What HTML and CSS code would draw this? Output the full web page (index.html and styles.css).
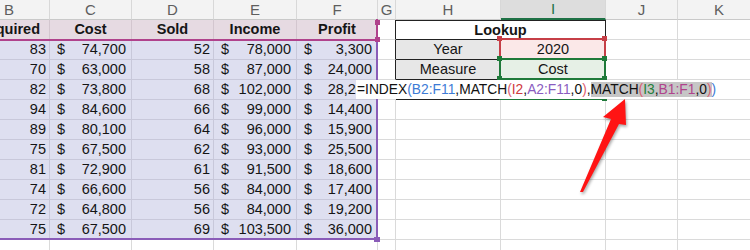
FILE: index.html
```html
<!DOCTYPE html>
<html>
<head>
<meta charset="utf-8">
<link rel="stylesheet" href="styles.css">
</head>
<body>
<div class="sheet">
  <div class="grid">
    <div class="c ch">B</div><div class="c ch">C</div><div class="c ch">D</div><div class="c ch">E</div><div class="c ch">F</div><div class="c ch">G</div><div class="c ch">H</div><div class="c ch sel">I</div><div class="c ch">J</div><div class="c ch">K</div>

    <div class="c th first"><span>Units Required</span></div><div class="c th">Cost</div><div class="c th">Sold</div><div class="c th">Income</div><div class="c th">Profit</div><div class="c g-lk"></div><div class="c lk-title">Lookup</div><div class="c"></div><div class="c"></div>

    <div class="c d num">83</div><div class="c d acc"><span>$</span><span>74,700</span></div><div class="c d num">52</div><div class="c d acc"><span>$</span><span>78,000</span></div><div class="c d acc"><span>$</span><span>3,300</span></div><div class="c g-lk"></div><div class="c lk-label">Year</div><div class="c lk-val pink">2020</div><div class="c"></div><div class="c"></div>

    <div class="c d num">70</div><div class="c d acc"><span>$</span><span>63,000</span></div><div class="c d num">58</div><div class="c d acc"><span>$</span><span>87,000</span></div><div class="c d acc"><span>$</span><span>24,000</span></div><div class="c g-lk"></div><div class="c lk-label">Measure</div><div class="c lk-val mint">Cost</div><div class="c"></div><div class="c"></div>

    <div class="c d num">82</div><div class="c d acc"><span>$</span><span>73,800</span></div><div class="c d num">68</div><div class="c d acc"><span>$</span><span>102,000</span></div><div class="c d acc"><span>$</span><span>28,200</span></div><div class="c"></div><div class="c h4"></div><div class="c"></div><div class="c"></div><div class="c"></div>

    <div class="c d num">94</div><div class="c d acc"><span>$</span><span>84,600</span></div><div class="c d num">66</div><div class="c d acc"><span>$</span><span>99,000</span></div><div class="c d acc"><span>$</span><span>14,400</span></div><div class="c"></div><div class="c"></div><div class="c"></div><div class="c"></div><div class="c"></div>

    <div class="c d num">89</div><div class="c d acc"><span>$</span><span>80,100</span></div><div class="c d num">64</div><div class="c d acc"><span>$</span><span>96,000</span></div><div class="c d acc"><span>$</span><span>15,900</span></div><div class="c"></div><div class="c"></div><div class="c"></div><div class="c"></div><div class="c"></div>

    <div class="c d num">75</div><div class="c d acc"><span>$</span><span>67,500</span></div><div class="c d num">62</div><div class="c d acc"><span>$</span><span>93,000</span></div><div class="c d acc"><span>$</span><span>25,500</span></div><div class="c"></div><div class="c"></div><div class="c"></div><div class="c"></div><div class="c"></div>

    <div class="c d num">81</div><div class="c d acc"><span>$</span><span>72,900</span></div><div class="c d num">61</div><div class="c d acc"><span>$</span><span>91,500</span></div><div class="c d acc"><span>$</span><span>18,600</span></div><div class="c"></div><div class="c"></div><div class="c"></div><div class="c"></div><div class="c"></div>

    <div class="c d num">74</div><div class="c d acc"><span>$</span><span>66,600</span></div><div class="c d num">56</div><div class="c d acc"><span>$</span><span>84,000</span></div><div class="c d acc"><span>$</span><span>17,400</span></div><div class="c"></div><div class="c"></div><div class="c"></div><div class="c"></div><div class="c"></div>

    <div class="c d num">72</div><div class="c d acc"><span>$</span><span>64,800</span></div><div class="c d num">56</div><div class="c d acc"><span>$</span><span>84,000</span></div><div class="c d acc"><span>$</span><span>19,200</span></div><div class="c"></div><div class="c"></div><div class="c"></div><div class="c"></div><div class="c"></div>

    <div class="c d num">75</div><div class="c d acc"><span>$</span><span>67,500</span></div><div class="c d num">69</div><div class="c d acc"><span>$</span><span>103,500</span></div><div class="c d acc"><span>$</span><span>36,000</span></div><div class="c"></div><div class="c"></div><div class="c"></div><div class="c"></div><div class="c"></div>

    <div class="c"></div><div class="c"></div><div class="c"></div><div class="c"></div><div class="c"></div><div class="c"></div><div class="c"></div><div class="c"></div><div class="c"></div><div class="c"></div>
  </div>

  <div class="rng rng-hdr"></div>
  <div class="rng rng-data"></div>
  <div class="hd hd-mag hd-a"></div>
  <div class="hd hd-mag hd-b"></div>
  <div class="hd hd-pur hd-c"></div>

  <div class="rng rng-i2"></div>
  <div class="rng rng-i3"></div>
  <div class="rng active-edge"></div>
  <div class="hd hd-red hd-i2l"></div>
  <div class="hd hd-red hd-i2r"></div>
  <div class="hd hd-grn hd-i3tl"></div>
  <div class="hd hd-grn hd-i3tr"></div>
  <div class="hd hd-grn hd-i3bl"></div>
  <div class="hd hd-grn hd-i3br"></div>
  <div class="hd hd-grn hd-i4br"></div>

  <div class="edit">=INDEX<span class="p-blue">(</span><span class="r-blue">B2:F11</span>,MATCH<span class="p-pink">(</span><span class="r-red">I2</span>,<span class="r-pur">A2:F11</span>,0<span class="p-pink">)</span>,<span class="hl">MATCH<span class="p-pink">(</span><span class="r-grn">I3</span>,<span class="r-mag">B1:F1</span>,0<span class="p-pink">)</span></span><span class="p-blue">)</span></div>

  <svg class="arrow" width="750" height="250" viewBox="0 0 750 250">
    <polygon points="625,99 603,117 611,119 580,192 583,192 619,124 626,125" fill="#ff1414"/>
  </svg>
</div>
</body>
</html>
```

FILE: styles.css
```css
html, body {
  margin: 0;
  padding: 0;
  background: #ffffff;
  overflow: hidden;
}
body {
  font-family: "Liberation Sans", Arial, sans-serif;
}
.sheet {
  position: relative;
  width: 750px;
  height: 250px;
  overflow: hidden;
}
.grid {
  display: grid;
  grid-template-columns: 81px 82px 82px 83px 81px 18px 105px 105px 72px 83px;
  grid-auto-rows: 20px;
  width: 792px;
  margin-left: -31px;
}
.c {
  box-sizing: border-box;
  border-right: 1px solid #dadada;
  border-bottom: 1px solid #dadada;
  font-size: 14.5px;
  line-height: 19px;
  white-space: nowrap;
  overflow: hidden;
  color: #151515;
}
.ch {
  background: #f3f3f3;
  border-right-color: #d8d8d8;
  border-bottom-color: #c9c9c9;
  text-align: center;
  color: #5e5e5e;
  font-size: 15px;
}
.ch.sel {
  background: #dddddd;
  border-bottom: 2px solid #1e7145;
  color: #1e7145;
  line-height: 18px;
}
.th {
  background: #e6dae2;
  border-right-color: #d3c6cf;
  border-bottom-color: #d3c6cf;
  font-weight: bold;
  text-align: center;
}
.th.first {
  display: flex;
  justify-content: flex-end;
  padding-right: 9px;
}
.d {
  background: #dedff0;
  border-right-color: #c8c8da;
  border-bottom-color: #c8c8da;
}
.num {
  text-align: right;
  padding-right: 3px;
}
.acc {
  display: flex;
  justify-content: space-between;
  padding: 0 5px 0 7px;
}
.g-lk {
  border-right-color: #222222;
}
.lk-title {
  grid-column: span 2;
  border-top: 1px solid #222222;
  border-right-color: #222222;
  border-bottom-color: #222222;
  font-weight: bold;
  text-align: center;
  line-height: 18px;
}
.lk-label {
  background: #e7e7e7;
  border-right-color: #222222;
  border-bottom-color: #222222;
  text-align: center;
}
.lk-val {
  border-right-color: #222222;
  border-bottom-color: #222222;
  text-align: center;
}
.pink { background: #fbe8e8; }
.mint { background: #e6f0e6; }
.h4 { border-bottom-color: #222222; }

/* range highlight overlays */
.rng {
  position: absolute;
  box-sizing: border-box;
}
.rng-hdr {
  left: -40px;
  top: 19px;
  width: 418px;
  height: 22px;
  border-right: 2px solid #b0428c;
  border-bottom: 2px solid #b0428c;
}
.rng-data {
  left: -40px;
  top: 41px;
  width: 418px;
  height: 199px;
  border-right: 2px solid #8a5cb8;
  border-bottom: 2px solid #8a5cb8;
}
.rng-i2 {
  left: 499px;
  top: 38px;
  width: 107px;
  height: 22px;
  border: 2px solid #c63f47;
}
.rng-i3 {
  left: 499px;
  top: 58px;
  width: 107px;
  height: 22px;
  border: 2px solid #1f7a3a;
}
.active-edge {
  left: 499px;
  top: 98px;
  width: 107px;
  height: 2px;
  background: #1f7a3a;
}
.hd {
  position: absolute;
  width: 5px;
  height: 5px;
}
.hd-mag { background: #b0428c; }
.hd-pur { background: #8a5cb8; }
.hd-red { background: #c63f47; }
.hd-grn { background: #1f7a3a; }
.hd-a { left: 375px; top: 20px; }
.hd-b { left: 375px; top: 37px; }
.hd-c { left: 374px; top: 237px; width: 6px; }
.hd-i2l { left: 497px; top: 36px; }
.hd-i2r { left: 602px; top: 36px; }
.hd-i3tl { left: 497px; top: 56px; }
.hd-i3tr { left: 602px; top: 56px; }
.hd-i3bl { left: 497px; top: 76px; }
.hd-i3br { left: 602px; top: 76px; }
.hd-i4br { left: 602px; top: 96px; }

/* in-cell formula editor */
.edit {
  position: absolute;
  left: 356px;
  top: 80px;
  height: 19px;
  padding: 0 3px 0 1px;
  background: #ffffff;
  font-size: 13.8px;
  line-height: 19px;
  white-space: nowrap;
  color: #111111;
}
.hl { background: #c6c6c6; }
.p-blue { color: #3d7bd6; }
.p-pink { color: #dc6070; }
.r-blue { color: #3d7bd6; }
.r-red { color: #d03a40; }
.r-pur { color: #8a5cc0; }
.r-grn { color: #23803a; }
.r-mag { color: #b0428c; }

.arrow {
  position: absolute;
  left: 0;
  top: 0;
  filter: drop-shadow(1px 2px 1.5px rgba(0, 0, 0, 0.35));
}
```
